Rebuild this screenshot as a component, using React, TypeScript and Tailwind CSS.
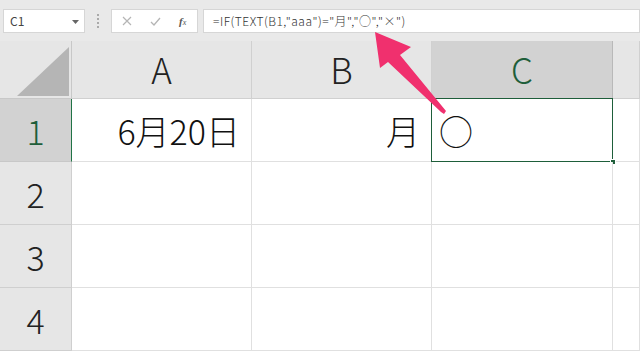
const FONT = { fontFamily: '"Noto Sans CJK JP", "Noto Sans", sans-serif' };

function FormulaBar() {
  return (
    <div className="flex h-[41px] items-start bg-[#e9e9e9] pl-[3px] pt-[9px]">
      {/* name box */}
      <div className="relative flex h-[24px] w-[82px] items-center border border-[#d6d6d6] bg-white pl-[6px] text-[12px] text-[#444]">
        C1
        <svg className="absolute right-[5px] top-[10px]" width="7" height="4" viewBox="0 0 7 4">
          <path d="M0 0 L7 0 L3.5 4 Z" fill="#666" />
        </svg>
      </div>
      {/* grip dots */}
      <div className="flex h-[24px] w-[26px] flex-col items-center justify-center gap-[2px]">
        {[0, 1, 2, 3].map((i) => (
          <span key={i} className="h-[2px] w-[2px] bg-[#aaa]" />
        ))}
      </div>
      {/* cancel / enter / fx */}
      <div className="flex h-[24px] w-[87px] items-center border border-[#d6d6d6] bg-white">
        <svg className="ml-[10px]" width="10" height="10" viewBox="0 0 10 10">
          <path d="M1 1 L9 9 M9 1 L1 9" stroke="#b5b5b5" strokeWidth="1.2" />
        </svg>
        <svg className="ml-[18px]" width="11" height="9" viewBox="0 0 11 9">
          <path d="M1 5 L4 8 L10 1" stroke="#b5b5b5" strokeWidth="1.3" fill="none" />
        </svg>
        <span
          className="ml-[18px] text-[11px] italic text-[#555]"
          style={{ fontFamily: '"Liberation Serif", serif' }}
        >
          <b>f</b>
          <span className="text-[8px]">x</span>
        </span>
      </div>
      {/* formula */}
      <div
        className="ml-[5px] flex h-[24px] flex-1 items-center border border-[#d6d6d6] bg-white pl-[9px] text-[12px] font-light tracking-[0.5px] text-[#333]"
        style={FONT}
      >
        =IF(TEXT(B1,"aaa")="月","○","×")
      </div>
    </div>
  );
}

function Corner() {
  return (
    <div className="relative h-[58px] border-b border-r border-[#c8c8c8] bg-[#e6e6e6]">
      <svg className="absolute left-0 top-0" width="71" height="57" viewBox="0 0 71 57">
        <path d="M69 6 L69 55 L17 55 Z" fill="#b5b5b5" />
      </svg>
    </div>
  );
}

function ColHead({ label, active }: { label: string; active?: boolean }) {
  return (
    <div
      className={
        active
          ? "flex h-[58px] items-center justify-center border-b border-r border-[#b9b9b9] bg-[#d2d2d2] text-[35px] font-light text-[#1e5e3a]"
          : "flex h-[58px] items-center justify-center border-b border-r border-[#d0d0d0] bg-[#e6e6e6] text-[35px] font-light text-[#222]"
      }
      style={FONT}
    >
      {label}
    </div>
  );
}

function RowHead({ label, active }: { label: string; active?: boolean }) {
  return (
    <div
      className={
        active
          ? "flex h-[63px] items-center justify-center border-b border-r border-b-[#c8c8c8] border-r-[#217346] bg-[#d2d2d2] text-[34px] font-light text-[#1e5e3a]"
          : "flex h-[63px] items-center justify-center border-b border-r border-[#cfcfcf] bg-[#e6e6e6] text-[34px] font-light text-[#222]"
      }
      style={FONT}
    >
      {label}
    </div>
  );
}

function Cell({ children, align = "right" }: { children?: React.ReactNode; align?: "left" | "right" }) {
  return (
    <div
      className={
        align === "right"
          ? "flex h-[63px] items-center justify-end border-b border-r border-[#e0e0e0] bg-white pr-[11px] text-[34px] font-light text-[#111]"
          : "flex h-[63px] items-center justify-start border-b border-r border-[#e0e0e0] bg-white pl-[7px] text-[34px] font-light text-[#111]"
      }
      style={FONT}
    >
      {children}
    </div>
  );
}

export default function App() {
  const rows = ["1", "2", "3", "4"];
  return (
    <div className="relative h-[351px] w-[640px] overflow-hidden bg-white" style={FONT}>
      <FormulaBar />
      <div className="grid grid-cols-[72px_180px_180px_181px_1fr]">
        <Corner />
        <ColHead label="A" />
        <ColHead label="B" />
        <ColHead label="C" active />
        <ColHead label="" />
        {rows.map((r) => (
          <div key={r} className="contents">
            <RowHead label={r} active={r === "1"} />
            <Cell>{r === "1" ? "6月20日" : null}</Cell>
            <Cell>{r === "1" ? "月" : null}</Cell>
            <div className="relative">
              <Cell align="left">{r === "1" ? "○" : null}</Cell>
              {r === "1" && (
                <>
                  <div className="absolute -left-px -top-px bottom-0 right-0 border-[1.5px] border-[#1e5e3a]" />
                  <div className="absolute -bottom-[3px] -right-[3px] h-[6px] w-[6px] border border-white bg-[#1e5e3a]" />
                </>
              )}
            </div>
            <Cell />
          </div>
        ))}
      </div>
      {/* pointer arrow */}
      <svg className="absolute left-0 top-0" width="640" height="351" viewBox="0 0 640 351">
        <path
          d="M375 32 L411 47 L400 55 L446 111 L444 114 L441 112 L388 62 L380 68 Z"
          fill="#f0306e"
        />
      </svg>
    </div>
  );
}
